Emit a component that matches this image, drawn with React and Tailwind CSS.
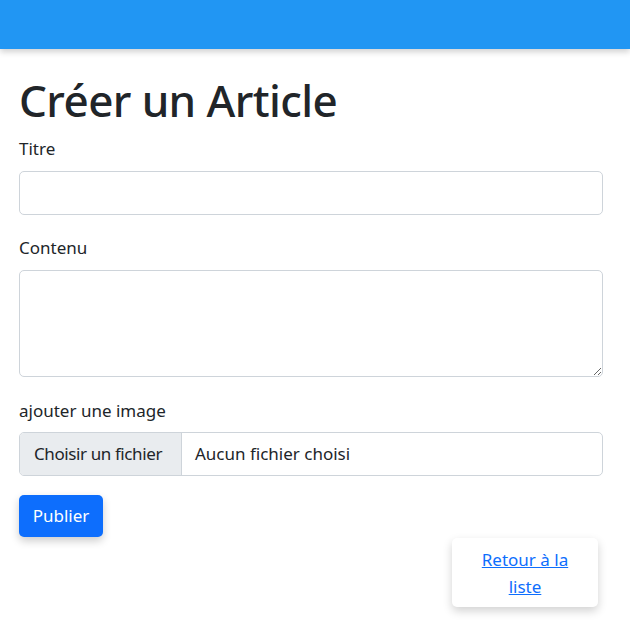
export default function App() {
  return (
    <div className="min-h-[634px] bg-white text-[#212529]" style={{ fontFamily: '"Noto Sans", "Open Sans", sans-serif' }}>
      <div className="h-[49px] bg-[#2196f3] shadow-[0_3px_6px_rgba(0,0,0,0.18)]"></div>
      <div className="pl-[19px] pr-[27px]">
        <h1 className="mt-[25px] text-[44px] font-medium leading-[1.2] mb-[8px] tracking-[-0.6px]">Créer un Article</h1>
        <div>
          <label className="block text-[17px] leading-[27px] mb-[9px]">Titre</label>
          <input type="text" className="block w-full h-[44px] rounded-[5px] border border-[#ced4da] px-3 outline-none" />
        </div>
        <div className="mt-[19px]">
          <label className="block text-[17px] leading-[27px] mb-[9px]">Contenu</label>
          <textarea className="block w-full h-[107px] rounded-[5px] border border-[#ced4da] px-3 outline-none"></textarea>
        </div>
        <div className="mt-[20px]">
          <label className="block text-[17px] leading-[27px] mb-[8px]">ajouter une image</label>
          <div className="flex h-[44px] rounded-[5px] border border-[#ced4da] overflow-hidden text-[17px]">
            <div className="flex flex-none items-center whitespace-nowrap bg-[#e9ecef] px-[14px] border-r border-[#ced4da] w-[162px] tracking-[-0.4px]">Choisir un fichier</div>
            <div className="flex items-center whitespace-nowrap px-[13px]">Aucun fichier choisi</div>
          </div>
        </div>
        <button className="mt-[19px] h-[42px] w-[84px] rounded-[5px] bg-[#0d6efd] text-white text-[17px] shadow-[0_4px_8px_rgba(0,0,0,0.2)]">Publier</button>
        <div className="flex justify-end pr-[5px] mt-px">
          <div className="w-[146px] rounded-[5px] bg-white shadow-[0_4px_10px_rgba(0,0,0,0.18)] pt-[8px] pb-[7px] text-center text-[17px] leading-[27px]">
            <a href="#" className="text-[#0d6efd] underline">Retour à la<br />liste</a>
          </div>
        </div>
      </div>
    </div>
  );
}
